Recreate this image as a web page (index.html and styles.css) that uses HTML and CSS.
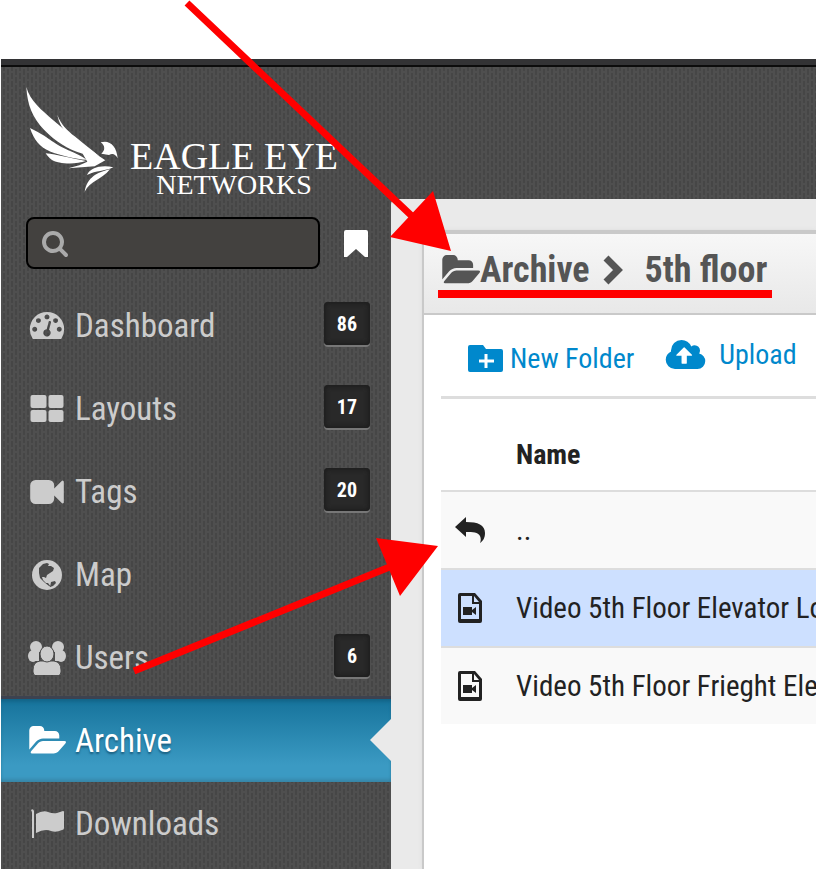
FILE: index.html
```
<!DOCTYPE html>
<html lang="en">
<head>
    <meta charset="UTF-8">
    <meta name="viewport" content="width=device-width, initial-scale=1.0">
    <title>Archive - Eagle Eye Networks</title>
    <link rel="stylesheet" href="styles.css">
</head>
<body>
    <svg class="symbols" width="0" height="0" aria-hidden="true">
        <symbol id="folder-open" viewBox="0 0 1943 1536">
            <path d="M1943 824q0 31-31 66l-336 396q-43 51-120.5 86.5t-143.5 35.5h-1088q-34 0-60.5-13t-26.5-43q0-31 31-66l336-396q43-51 120.5-86.5t143.5-35.5h1088q34 0 60.5 13t26.5 43zm-343-344v160h-832q-94 0-197 47.5t-164 119.5l-337 396-5 6q0-4-.5-12.5t-.5-12.5v-960q0-92 66-158t158-66h320q92 0 158 66t66 158v32h544q92 0 158 66t66 158z"/>
        </symbol>
        <symbol id="file-video" viewBox="0 0 24 30">
            <path fill-rule="evenodd" d="M2 0h15l7 8v20q0 2-2 2h-20q-2 0-2-2v-26q0-2 2-2zM3 3v23h18v-15h-7v-8zM16 3v6h5z"/>
            <path d="M5 14h9v3l4-3v8l-4-3v3h-9z"/>
        </symbol>
    </svg>

    <div class="app">
        <header class="header">
            <a class="logo" href="#" aria-label="Eagle Eye Networks">
                <svg class="logo-bird" viewBox="0 0 330 330">
                    <path d="M19 6C30 48 66 76 98 104C142 142 196 184 256 226L224 244L145 250L178 241L202 230L188 206C146 194 104 168 72 134C38 98 22 62 19 6z"/>
                    <path d="M30 129C60 142 86 162 114 180C142 196 174 206 200 224C166 222 124 212 92 200C58 186 42 164 30 129z"/>
                    <path d="M77 205C112 208 150 220 198 228C164 240 114 236 96 225C86 218 82 212 77 205z"/>
                    <path d="M112 89C122 118 142 136 164 154C190 176 214 194 238 214C204 196 172 176 148 152C128 134 116 112 112 89z"/>
                    <path d="M242 172C270 164 290 184 293 220C287 208 278 203 267 210L244 206C256 196 256 182 242 172z"/>
                    <path d="M280 247C246 238 210 248 201 270C230 256 252 260 280 247z"/>
                    <path d="M270 253C232 262 202 276 194 320C210 288 246 284 270 253z"/>
                </svg>
                <span class="logo-text">
                    <span class="logo-name">EAGLE EYE</span>
                    <span class="logo-sub">NETWORKS</span>
                </span>
            </a>
        </header>

        <aside class="sidebar">
            <form class="search">
                <div class="search-box">
                    <svg class="search-icon" viewBox="0 0 1792 1792"><path d="M1216 832q0-185-131.5-316.5t-316.5-131.5-316.5 131.5-131.5 316.5 131.5 316.5 316.5 131.5 316.5-131.5 131.5-316.5zm512 832q0 52-38 90t-90 38q-54 0-90-38l-343-342q-179 124-399 124-143 0-273.5-55.5t-225-150-150-225-55.5-273.5 55.5-273.5 150-225 225-150 273.5-55.5 273.5 55.5 225 150 150 225 55.5 273.5q0 220-124 399l343 343q37 37 37 90z"/></svg>
                    <input type="text" aria-label="Search">
                </div>
                <button type="button" class="bookmark" aria-label="Bookmarks">
                    <svg viewBox="0 0 24 27"><path d="M2 0h20q2 0 2 2v25h-3l-9-8-9 8h-3v-25q0-2 2-2z"/></svg>
                </button>
            </form>

            <nav class="menu">
                <a href="#">
                    <svg width="34" height="27" viewBox="0 0 1792 1408"><path d="M384 896q0-53-37.5-90.5t-90.5-37.5-90.5 37.5-37.5 90.5 37.5 90.5 90.5 37.5 90.5-37.5 37.5-90.5zm192-448q0-53-37.5-90.5t-90.5-37.5-90.5 37.5-37.5 90.5 37.5 90.5 90.5 37.5 90.5-37.5 37.5-90.5zm428 481l101-382q6-26-7.5-48.5t-38.5-29.5-48 6.5-30 39.5l-101 382q-60 5-107 43.5t-63 98.5q-20 77 20 146t117 89 146-20 89-117q16-60-6-117t-72-91zm660-33q0-53-37.5-90.5t-90.5-37.5-90.5 37.5-37.5 90.5 37.5 90.5 90.5 37.5 90.5-37.5 37.5-90.5zm-640-640q0-53-37.5-90.5t-90.5-37.5-90.5 37.5-37.5 90.5 37.5 90.5 90.5 37.5 90.5-37.5 37.5-90.5zm448 192q0-53-37.5-90.5t-90.5-37.5-90.5 37.5-37.5 90.5 37.5 90.5 90.5 37.5 90.5-37.5 37.5-90.5zm320 448q0 261-141 483-19 29-54 29h-1402q-35 0-54-29-141-221-141-483 0-182 71-348t191-286 286-191 348-71 348 71 286 191 191 286 71 348z"/></svg>
                    <span class="label">Dashboard</span>
                    <span class="badge">86</span>
                </a>
                <a href="#">
                    <svg width="33" height="27" viewBox="0 0 33 27"><rect width="16" height="13" rx="2"/><rect x="18" width="15" height="13" rx="2"/><rect y="15" width="16" height="12" rx="2"/><rect x="18" y="15" width="15" height="12" rx="2"/></svg>
                    <span class="label">Layouts</span>
                    <span class="badge">17</span>
                </a>
                <a href="#">
                    <svg width="34" height="24" viewBox="0 0 1792 1280"><path d="M1792 96v1088q0 42-39 59-13 5-25 5-27 0-45-19l-403-403v166q0 119-84.5 203.5t-203.5 84.5h-704q-119 0-203.5-84.5t-84.5-203.5v-704q0-119 84.5-203.5t203.5-84.5h704q119 0 203.5 84.5t84.5 203.5v165l403-402q18-19 45-19 12 0 25 5 39 17 39 59z"/></svg>
                    <span class="label">Tags</span>
                    <span class="badge">20</span>
                </a>
                <a href="#">
                    <svg width="30" height="30" viewBox="0 0 30 30"><circle cx="15" cy="15" r="15"/><path fill="#4a4a4a" d="M7 8l4-4 4-1 2 1-1 2 3 0 3 2-1 3-3 2-3 2-1 3-2-1-2 0 1 3 3 3 2 0 3 4-2-1-5-4-4-4-1-5zM19 22l4-1 1 2-3 3-3 1z"/></svg>
                    <span class="label">Map</span>
                </a>
                <a href="#">
                    <svg width="38" height="34" viewBox="0 0 38 34"><circle cx="8" cy="6" r="6"/><circle cx="30" cy="6" r="6"/><ellipse cx="5" cy="15" rx="5" ry="6"/><ellipse cx="33" cy="15" rx="5" ry="6"/><path d="M5 11h6v9h-6zM27 11h6v9h-6z"/><path stroke="#4a4a4a" d="M12 20h14q7 1 7 9v2q0 4-4 4h-20q-4 0-4-4v-2q0-8 7-9z"/><ellipse cx="19" cy="13" rx="7" ry="8" stroke="#4a4a4a"/></svg>
                    <span class="label">Users</span>
                    <span class="badge">6</span>
                </a>
                <a href="#" class="active">
                    <svg width="38" height="30"><use href="#folder-open"/></svg>
                    <span class="label">Archive</span>
                </a>
                <a href="#">
                    <svg width="34" height="29" viewBox="0 0 34 29"><path d="M1 1q2-2 3 1v27h-2v-26zM6 5q7-4 12-2t9 1l6-2q1 0 1 1v16q0 2-2 2-6 3-11 1-6-3-15 2z"/></svg>
                    <span class="label">Downloads</span>
                </a>
            </nav>
        </aside>

        <main class="content">
            <section class="panel">
                <h1 class="panel-title">
                    <svg width="39" height="31"><use href="#folder-open"/></svg>
                    <span>Archive</span>
                    <svg class="chevron" width="20" height="30" viewBox="0 0 20 30"><path d="M3 3l12 12-12 12" fill="none" stroke="#555" stroke-width="7"/></svg>
                    <span>5th floor</span>
                </h1>
                <div class="toolbar">
                    <a href="#" class="new-folder">
                        <svg width="35" height="27" viewBox="0 0 35 27"><path d="M2 0h13l3 4h15q2 0 2 2v19q0 2-2 2h-31q-2 0-2-2v-23q0-2 2-2z"/><path d="M18 9v14M11 16h15" stroke="#fff" stroke-width="3"/></svg>
                        New Folder
                    </a>
                    <a href="#" class="upload">
                        <svg width="41" height="29" viewBox="0 0 1920 1408"><path d="M1280 736q0-14-9-23l-352-352q-9-9-23-9t-23 9l-351 351q-10 12-10 24 0 14 9 23t23 9h224v352q0 13 9.5 22.5t22.5 9.5h192q13 0 22.5-9.5t9.5-22.5v-352h224q13 0 22.5-9.5t9.5-22.5zm640 288q0 159-112.5 271.5t-271.5 112.5h-1088q-185 0-316.5-131.5t-131.5-316.5q0-130 70-240t188-165q-2-30-2-43 0-212 150-362t362-150q156 0 285.5 87t188.5 231q71-62 166-62 106 0 181 75t75 181q0 76-41 138 130 31 213.5 135.5t83.5 238.5z"/></svg>
                        Upload
                    </a>
                </div>
                <table class="files">
                    <thead>
                        <tr><th class="icon-cell"></th><th>Name</th></tr>
                    </thead>
                    <tbody>
                        <tr>
                            <td class="icon-cell"><svg width="30" height="26" viewBox="0 0 30 26"><path d="M11 0v5c12 0 19 3 19 11 0 5-2 8-5 10 1-2 1-5 0-7-2-4-7-4-14-4v5l-11-10z"/></svg></td>
                            <td>..</td>
                        </tr>
                        <tr class="selected">
                            <td class="icon-cell"><svg width="24" height="30"><use href="#file-video"/></svg></td>
                            <td>Video 5th Floor Elevator Lobby</td>
                        </tr>
                        <tr>
                            <td class="icon-cell"><svg width="24" height="30"><use href="#file-video"/></svg></td>
                            <td>Video 5th Floor Frieght Elevator</td>
                        </tr>
                    </tbody>
                </table>
            </section>
        </main>
    </div>

    <!-- red callouts drawn over the page -->
    <svg class="callouts" width="816" height="870" viewBox="0 0 816 870" aria-hidden="true">
        <path d="M187 3L415 219M134 671L392 566" stroke="#f00" stroke-width="7"/>
        <path d="M451 251L390 237L433 191zM438 546L376 538L400 596z" fill="#f00"/>
        <path d="M438 294h334" stroke="#f00" stroke-width="8"/>
    </svg>
</body>
</html>
```
FILE: styles.css
```
* {
    box-sizing: border-box;
}
body {
    margin: 0;
    padding: 59px 0 1px 1px;
    min-height: 100vh;
    display: flex;
    background: #fff;
    font-family: "Roboto Condensed", Roboto, sans-serif;
    overflow: hidden;
}
a {
    text-decoration: none;
}
svg {
    display: block;
    flex: none;
    fill: currentColor;
}
.symbols, .callouts {
    position: absolute;
    top: 0;
    left: 0;
}
.callouts {
    pointer-events: none;
}
.app {
    flex: 1;
    min-width: 0;
    display: grid;
    grid-template-columns: 390px minmax(0, 1fr);
    grid-template-rows: auto 1fr;
    border-top: 6px solid #333335;
    background:
        conic-gradient(at 2px 6px, transparent 75%, #464646 0) 2px 0 / 8px 8px,
        conic-gradient(at 2px 6px, transparent 75%, #464646 0) 6px 4px / 8px 8px,
        #4f4f4f;
}

/* header */
.header {
    grid-column: 1 / 3;
    border-top: 2px solid #0c0c0c;
}
.logo {
    display: inline-flex;
    align-items: flex-end;
    height: 132px;
    padding-left: 19px;
    color: #fff;
    font-family: "Liberation Serif", serif;
}
.logo-bird {
    width: 110px;
    height: 110px;
    margin-bottom: 4px;
}
.logo-text {
    display: flex;
    flex-direction: column;
    align-items: center;
}
.logo-name {
    font-size: 38px;
    line-height: 28px;
}
.logo-sub {
    font-size: 28px;
    line-height: 29px;
}

/* sidebar */
.sidebar {
    padding-top: 18px;
}
.search {
    display: flex;
    align-items: center;
    gap: 24px;
    margin: 0 23px 15px 25px;
}
.search-box {
    flex: 1;
    min-width: 0;
    display: flex;
    align-items: center;
    height: 52px;
    padding-left: 12px;
    border: 2px solid #000;
    border-radius: 8px;
    background: #43413f;
    color: #aaa;
}
.search-icon {
    width: 30px;
    height: 28px;
}
.search-box input {
    flex: 1;
    min-width: 0;
    border: 0;
    outline: 0;
    background: none;
    color: #ccc;
    font: inherit;
    font-size: 28px;
}
.bookmark {
    padding: 0;
    border: 0;
    background: none;
    color: #fff;
}
.bookmark svg {
    width: 24px;
    height: 27px;
}
.menu a {
    position: relative;
    display: flex;
    align-items: center;
    gap: 9px;
    height: 83px;
    padding: 0 21px 0 27px;
    color: #ccc;
    font-size: 33px;
}
.menu svg {
    width: 38px;
}
.menu .label {
    flex: 1;
}
.menu .badge {
    min-width: 36px;
    margin-bottom: 4px;
    padding: 2px 13px 0;
    border-radius: 4px;
    background: #292929;
    box-shadow: inset 0 0 4px 2px #1e1e1e, 0 2px 0 #777;
    color: #fff;
    font-size: 20px;
    font-weight: bold;
    line-height: 41px;
}
.menu .active {
    background: linear-gradient(#16739b, #3b9ac3 80%);
    box-shadow: 0 -3px 0 #3c4250, inset 0 4px 4px -2px #125f82, inset 0 -4px 4px -2px #37809f;
    color: #fff;
    text-shadow: 0 2px 2px #1b5f80;
}
.menu .active::after {
    content: "";
    position: absolute;
    top: 20px;
    right: 0;
    border: 21px solid transparent;
    border-left-width: 0;
    border-right-color: #eaeaea;
}

/* content */
.content {
    padding: 31px 0 0 31px;
    border-top-left-radius: 5px;
    background: #eaeaea;
    overflow: hidden;
}
.panel {
    height: 100%;
    border-top: 4px solid #c9c9c9;
    border-left: 2px solid #c9c9c9;
    background: #fff;
    box-shadow: 0 0 4px #ddd;
}
.panel-title {
    display: flex;
    align-items: center;
    height: 81px;
    margin: 0;
    padding: 0 0 7px 17px;
    border-bottom: 2px solid #c9c9c9;
    background: linear-gradient(#f7f7f7, #e8e8e8);
    color: #555;
    font-size: 36px;
    white-space: nowrap;
}
.panel-title .chevron {
    margin: 0 22px 0 13px;
}
.toolbar {
    display: flex;
    align-items: center;
    gap: 31px;
    height: 84px;
    margin-left: 17px;
    padding-left: 27px;
    border-bottom: 3px solid #ddd;
    white-space: nowrap;
}
.toolbar a {
    display: flex;
    align-items: center;
    gap: 7px;
    color: #0088cc;
    font-size: 28px;
}
.toolbar .new-folder {
    padding-top: 5px;
}
.toolbar .upload {
    gap: 13px;
    padding-bottom: 2px;
}
.files {
    width: calc(100% - 17px);
    margin-left: 17px;
    border-spacing: 0;
    table-layout: fixed;
    color: #222;
    font-size: 28px;
    white-space: nowrap;
}
.files th {
    height: 91px;
    padding: 20px 0 0;
    text-align: left;
}
.files td {
    height: 78px;
    padding: 0;
    border-top: 2px solid #ddd;
    background: #f9f9f9;
    font-size: 29px;
    overflow: hidden;
}
.files .selected td {
    background: #cde0ff;
}
.files .icon-cell {
    width: 75px;
}
.files td svg {
    width: 58px;
}
```
